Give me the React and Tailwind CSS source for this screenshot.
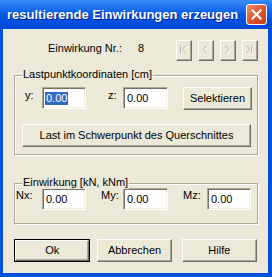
import React from 'react';

const font = { fontFamily: '"Liberation Sans", Arial, sans-serif' };

function Btn({ children, className = '', def = false }) {
  const face = (
    <div className="flex h-full w-full items-center justify-center border border-t-white border-l-white border-r-[#716F64] border-b-[#716F64] bg-[#ECE9D8] text-[11px] text-black shadow-[inset_-1px_-1px_0_#ACA899]">
      {children}
    </div>
  );
  if (def) return <div className={`h-[23px] border border-black ${className}`}>{face}</div>;
  return <div className={`h-[23px] ${className}`}>{face}</div>;
}

function Field({ className = '', selected = false }) {
  return (
    <div className={`flex h-[22px] items-center border border-t-[#ACA899] border-l-[#ACA899] border-r-white border-b-white bg-white pl-[2px] text-[11px] text-black shadow-[inset_1px_1px_0_#716F64,inset_-1px_-1px_0_#F1EFE2] ${className}`}>
      {selected ? <span className="bg-[#316AC5] px-[1px] leading-[13px] text-white">0.00</span> : <span className="pl-[1px]">0.00</span>}
    </div>
  );
}

function Group({ title, className = '', children }) {
  return (
    <div className={`relative border border-[#ACA899] shadow-[inset_1px_1px_0_#fff,1px_1px_0_#fff] ${className}`}>
      <span className="absolute -top-[8px] left-[7px] whitespace-nowrap bg-[#ECE9D8] px-[1px] text-[11px] leading-[13px] text-black">{title}</span>
      {children}
    </div>
  );
}

function NavBtn({ kind }) {
  const lines = {
    first: ['M5 6v9', 'M11 6l-4 4.5 4 4.5'],
    prev: ['M10 6l-4 4.5 4 4.5'],
    next: ['M6 6l4 4.5-4 4.5'],
    last: ['M5 6l4 4.5-4 4.5', 'M11 6v9'],
  }[kind];
  return (
    <div className="h-[21px] w-[16px] border border-t-white border-l-white border-r-[#716F64] border-b-[#716F64] bg-[#ECE9D8] shadow-[inset_-1px_-1px_0_#ACA899]">
      <svg width="14" height="19" viewBox="0 0 16 21" className="-ml-[1px] -mt-[1px]">
        {lines.map((d, i) => (
          <path key={'w' + i} d={d} transform="translate(1 1)" stroke="#fff" strokeWidth="1" fill="none" />
        ))}
        {lines.map((d, i) => (
          <path key={'g' + i} d={d} stroke="#ACA899" strokeWidth="1" fill="none" />
        ))}
      </svg>
    </div>
  );
}

export default function App() {
  return (
    <div className="flex h-[277px] w-[272px] flex-col bg-[#0050E0]" style={font}>
      {/* title bar */}
      <div className="flex h-[29px] shrink-0 items-center bg-gradient-to-b from-[#3B8CF5] via-[#0058E8] to-[#0048D8] pl-[7px] pr-[5px]">
        <span className="flex-1 whitespace-nowrap text-[13px] font-bold text-white [text-shadow:1px_1px_0_#0A1E8C]">
          resultierende Einwirkungen erzeugen
        </span>
        <div className="flex h-[21px] w-[21px] items-center justify-center rounded-[3px] border border-white bg-gradient-to-br from-[#F08A6A] via-[#E0552E] to-[#C4401C]">
          <svg width="11" height="11" viewBox="0 0 11 11">
            <path d="M1.5 1.5l8 8M9.5 1.5l-8 8" stroke="#fff" strokeWidth="2.2" strokeLinecap="square" />
          </svg>
        </div>
      </div>

      {/* client */}
      <div className="mb-[4px] ml-[3px] mr-[4px] flex flex-1 flex-col bg-[#ECE9D8] px-[11px] text-[11px] text-black">
        <div className="mt-[11px] flex h-[21px] items-start">
          <span className="w-[124px] shrink-0 whitespace-nowrap pl-[34px] pt-[2px] leading-[13px]">Einwirkung Nr.:</span>
          <span className="w-[38px] shrink-0 pt-[2px] leading-[13px]">8</span>
          <div className="flex gap-[6px]">
            <NavBtn kind="first" />
            <NavBtn kind="prev" />
            <NavBtn kind="next" />
            <NavBtn kind="last" />
          </div>
        </div>

        <Group title="Lastpunktkoordinaten [cm]" className="mt-[14px] h-[80px] w-[244px]">
          <div className="flex items-start pl-[10px] pt-[11px]">
            <span className="w-[17px] pt-[2px] leading-[13px]">y:</span>
            <Field selected className="w-[44px]" />
            <span className="ml-[22px] w-[15px] pt-[2px] leading-[13px]">z:</span>
            <Field className="w-[45px]" />
            <Btn className="ml-[15px] w-[69px]">Selektieren</Btn>
          </div>
          <Btn className="ml-[7px] mt-[14px] w-[229px]">Last im Schwerpunkt des Querschnittes</Btn>
        </Group>

        <Group title="Einwirkung [kN, kNm]" className="mt-[28px] h-[41px] w-[244px]">
          <div className="flex items-start pl-[1px] pt-[4px]">
            <span className="w-[26px] pt-[1px] leading-[13px]">Nx:</span>
            <Field className="w-[44px]" />
            <span className="ml-[15px] w-[22px] pt-[1px] leading-[13px]">My:</span>
            <Field className="w-[45px]" />
            <span className="ml-[15px] w-[24px] pt-[1px] leading-[13px]">Mz:</span>
            <Field className="w-[44px]" />
          </div>
        </Group>

        <div className="mt-[15px] flex">
          <Btn def className="w-[77px]">Ok</Btn>
          <Btn className="ml-[7px] w-[75px]">Abbrechen</Btn>
          <Btn className="ml-[10px] w-[76px]">Hilfe</Btn>
        </div>
      </div>
    </div>
  );
}
